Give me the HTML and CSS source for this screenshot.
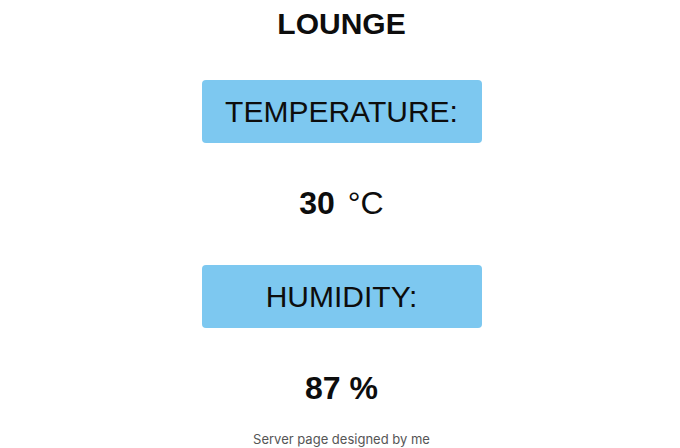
FILE: index.html
```html
<!DOCTYPE html>
<html lang="en">
<head>
<meta charset="utf-8">
<title>Lounge</title>
<link rel="stylesheet" href="styles.css">
</head>
<body>
<main class="page">
  <h1 class="title">LOUNGE</h1>
  <div class="sensors">
    <section class="sensor">
      <div class="label">TEMPERATURE:</div>
      <p class="value"><b class="num">30</b> <span class="unit">°C</span></p>
    </section>
    <section class="sensor">
      <div class="label">HUMIDITY:</div>
      <p class="value"><b class="num">87</b> <b class="unit-bold">%</b></p>
    </section>
  </div>
  <footer class="footer">Server page designed by me</footer>
</main>
</body>
</html>
```
FILE: styles.css
```css
html, body {
  margin: 0;
  padding: 0;
  background: #ffffff;
}

.page {
  display: flex;
  flex-direction: column;
  align-items: center;
  padding-top: 7px;
  padding-left: 3px;
  font-family: "Liberation Sans", Arial, sans-serif;
  color: #0d0d0d;
}

.title {
  margin: 0 0 39px;
  font-size: 30px;
  line-height: 34px;
  font-weight: bold;
}

.sensors {
  display: flex;
  flex-direction: column;
  align-items: center;
  gap: 44px;
}

.sensor {
  display: flex;
  flex-direction: column;
  align-items: center;
  gap: 42px;
}

.label {
  width: 280px;
  height: 63px;
  display: flex;
  align-items: center;
  justify-content: center;
  background: #7dc8f0;
  border-radius: 4px;
  font-size: 30px;
  line-height: 34px;
}

.value {
  margin: 0;
  font-size: 32px;
  line-height: 36px;
}

.num {
  font-weight: bold;
}

.unit {
  font-weight: normal;
  margin-left: 4px;
}

.unit-bold {
  font-weight: bold;
}

.footer {
  margin-top: 23px;
  font-family: Inter, "Noto Sans", sans-serif;
  font-size: 13px;
  line-height: 20px;
  color: #555555;
}
```
